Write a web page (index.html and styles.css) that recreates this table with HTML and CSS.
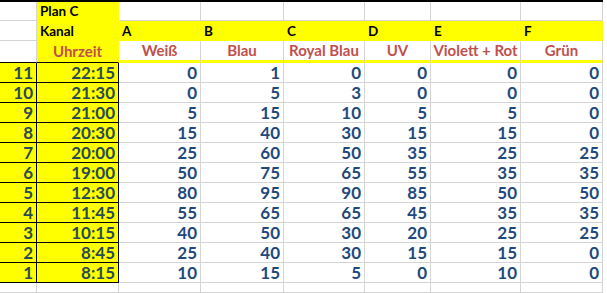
FILE: index.html
```html
<!DOCTYPE html>
<html lang="de">
<head>
<meta charset="utf-8">
<title>Plan C</title>
<link rel="stylesheet" href="styles.css">
</head>
<body>
<div class="sheet">
  <div class="c"></div>
  <div class="c y lbl">Plan C</div>
  <div class="c"></div><div class="c"></div><div class="c"></div><div class="c"></div><div class="c"></div><div class="c"></div>

  <div class="c"></div>
  <div class="c y lbl">Kanal</div>
  <div class="c y lbl">A</div><div class="c y lbl">B</div><div class="c y lbl">C</div><div class="c y lbl">D</div><div class="c y lbl">E</div><div class="c y lbl">F</div>

  <div class="c hk"></div>
  <div class="c y hk hd">Uhrzeit</div>
  <div class="c hl hd">Weiß</div><div class="c hl hd">Blau</div><div class="c hl hd">Royal Blau</div><div class="c hl hd">UV</div><div class="c hl hd">Violett + Rot</div><div class="c hl hd">Grün</div>

  <div class="c k n">11</div><div class="c k n">22:15</div><div class="c n">0</div><div class="c n">1</div><div class="c n">0</div><div class="c n">0</div><div class="c n">0</div><div class="c n">0</div>
  <div class="c k n">10</div><div class="c k n">21:30</div><div class="c n">0</div><div class="c n">5</div><div class="c n">3</div><div class="c n">0</div><div class="c n">0</div><div class="c n">0</div>
  <div class="c k n">9</div><div class="c k n">21:00</div><div class="c n">5</div><div class="c n">15</div><div class="c n">10</div><div class="c n">5</div><div class="c n">5</div><div class="c n">0</div>
  <div class="c k n">8</div><div class="c k n">20:30</div><div class="c n">15</div><div class="c n">40</div><div class="c n">30</div><div class="c n">15</div><div class="c n">15</div><div class="c n">0</div>
  <div class="c k n">7</div><div class="c k n">20:00</div><div class="c n">25</div><div class="c n">60</div><div class="c n">50</div><div class="c n">35</div><div class="c n">25</div><div class="c n">25</div>
  <div class="c k n">6</div><div class="c k n">19:00</div><div class="c n">50</div><div class="c n">75</div><div class="c n">65</div><div class="c n">55</div><div class="c n">35</div><div class="c n">35</div>
  <div class="c k n">5</div><div class="c k n">12:30</div><div class="c n">80</div><div class="c n">95</div><div class="c n">90</div><div class="c n">85</div><div class="c n">50</div><div class="c n">50</div>
  <div class="c k n">4</div><div class="c k n">11:45</div><div class="c n">55</div><div class="c n">65</div><div class="c n">65</div><div class="c n">45</div><div class="c n">35</div><div class="c n">35</div>
  <div class="c k n">3</div><div class="c k n">10:15</div><div class="c n">40</div><div class="c n">50</div><div class="c n">30</div><div class="c n">20</div><div class="c n">25</div><div class="c n">25</div>
  <div class="c k n">2</div><div class="c k n">8:45</div><div class="c n">25</div><div class="c n">40</div><div class="c n">30</div><div class="c n">15</div><div class="c n">15</div><div class="c n">0</div>
  <div class="c k n">1</div><div class="c k n">8:15</div><div class="c n">10</div><div class="c n">15</div><div class="c n">5</div><div class="c n">0</div><div class="c n">10</div><div class="c n">0</div>

  <div class="c"></div><div class="c"></div><div class="c"></div><div class="c"></div><div class="c"></div><div class="c"></div><div class="c"></div><div class="c"></div>
</div>
</body>
</html>
```

FILE: styles.css
```css
html, body {
  margin: 0;
  padding: 0;
  background: #ffffff;
}

body {
  font-family: Lato, "Open Sans", sans-serif;
  font-weight: 700;
}

.sheet {
  display: grid;
  grid-template-columns: 37px 82px 82px 83px 81px 66px 90px 82px;
  grid-template-rows: 19px 20px 22px repeat(11, 20px) 10px;
  width: 603px;
  border-top: 2px solid #000000;
}

.c {
  box-sizing: border-box;
  border-right: 1px solid #d4d4d4;
  border-bottom: 1px solid #d4d4d4;
  display: flex;
  align-items: center;
  padding: 0 3px;
  white-space: nowrap;
  overflow: hidden;
}

.y {
  background: #ffff00;
  border-color: #ffff00;
}

.lbl {
  font-size: 13.5px;
  color: #000000;
  padding-left: 3px;
}

.hd {
  font-size: 15px;
  color: #c0504d;
  justify-content: center;
  padding-bottom: 2px;
}

.hk {
  border-bottom-color: #000000;
}

.hl {
  border-bottom: 3px solid #ffff00;
}

.n {
  font-size: 17px;
  color: #1f497d;
  justify-content: flex-end;
  padding-right: 3px;
  padding-bottom: 1px;
}

.k {
  background: #ffff00;
  border-right-color: #000000;
  border-bottom-color: #000000;
  color: #2a4a58;
}
```
